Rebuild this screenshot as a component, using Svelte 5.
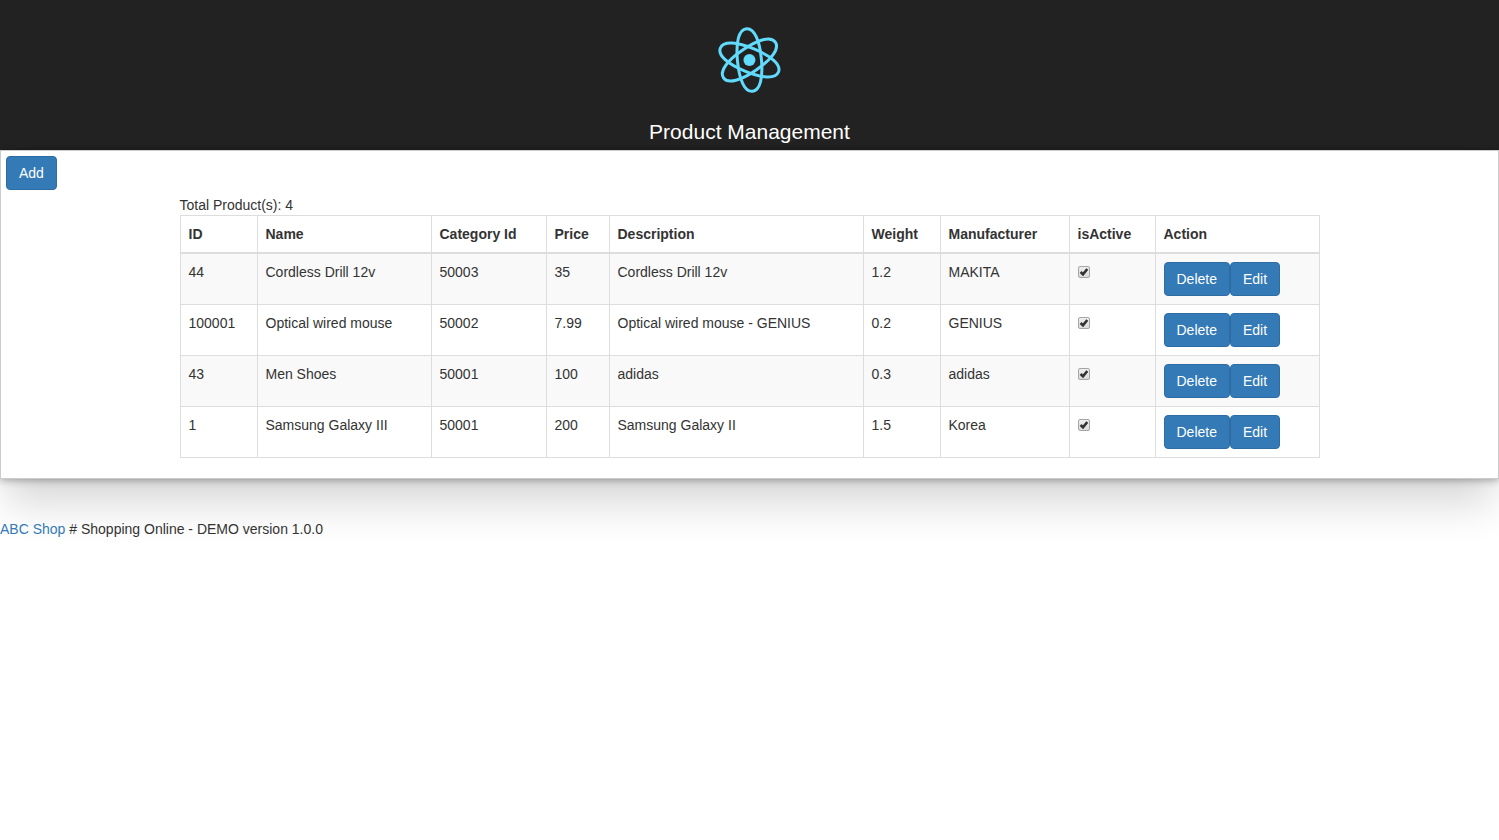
<script>
  const products = [
    { id: 44, name: 'Cordless Drill 12v', category: 50003, price: 35, description: 'Cordless Drill 12v', weight: 1.2, manufacturer: 'MAKITA', active: true },
    { id: 100001, name: 'Optical wired mouse', category: 50002, price: 7.99, description: 'Optical wired mouse - GENIUS', weight: 0.2, manufacturer: 'GENIUS', active: true },
    { id: 43, name: 'Men Shoes', category: 50001, price: 100, description: 'adidas', weight: 0.3, manufacturer: 'adidas', active: true },
    { id: 1, name: 'Samsung Galaxy III', category: 50001, price: 200, description: 'Samsung Galaxy II', weight: 1.5, manufacturer: 'Korea', active: true }
  ];
  const columns = [
    { label: 'ID', width: 77 },
    { label: 'Name', width: 174 },
    { label: 'Category Id', width: 115 },
    { label: 'Price', width: 63 },
    { label: 'Description', width: 254 },
    { label: 'Weight', width: 77 },
    { label: 'Manufacturer', width: 129 },
    { label: 'isActive', width: 86 },
    { label: 'Action', width: 164 }
  ];
  const orbit = 'M11 0C11 2.8 6.4 4.2 0 4.2S-11 2.8-11 0-6.4-4.2 0-4.2 11-2.8 11 0Z';
</script>

<header>
  <svg class="logo" viewBox="-13.8 -14 28 28" aria-hidden="true">
    <g transform="rotate(-5.5)" fill="none" stroke="#61dafb" stroke-width="1.05">
      <path d={orbit} transform="rotate(28)" />
      <path d={orbit} transform="rotate(90)" />
      <path d={orbit} transform="rotate(151)" />
    </g>
    <circle r="2.1" fill="#61dafb" />
  </svg>
  <h1>Product Management</h1>
</header>

<main>
  <div class="toolbar"><button type="button">Add</button></div>
  <div class="container">
    <div>Total Product(s): {products.length}</div>
    <table>
      <colgroup>
        {#each columns as column}<col style:width="{column.width}px" />{/each}
      </colgroup>
      <thead>
        <tr>
          {#each columns as column}<th scope="col">{column.label}</th>{/each}
        </tr>
      </thead>
      <tbody>
        {#each products as p (p.id)}
          <tr>
            <td>{p.id}</td>
            <td>{p.name}</td>
            <td>{p.category}</td>
            <td>{p.price}</td>
            <td>{p.description}</td>
            <td>{p.weight}</td>
            <td>{p.manufacturer}</td>
            <td><input type="checkbox" aria-label="isActive" bind:checked={p.active} /></td>
            <td><button type="button">Delete</button><button type="button">Edit</button></td>
          </tr>
        {/each}
      </tbody>
    </table>
  </div>
</main>

<footer><a href="#shop">ABC Shop</a> # Shopping Online - DEMO version 1.0.0</footer>

<style>
  :global(body) {
    margin: 0;
    background: #fff;
    color: #333;
    font: 14px/20px "Liberation Sans", Arial, sans-serif;
  }
  :global(*) { box-sizing: border-box; }

  header {
    min-height: 150px;
    padding-top: 20px;
    background: #222;
    color: #fff;
    text-align: center;
  }
  .logo {
    display: block;
    width: 80px;
    height: 80px;
    margin: 0 auto 20px;
  }
  h1 {
    margin: 0;
    font-size: 21px;
    font-weight: 400;
    line-height: 23px;
  }

  main {
    border: 1px solid #ccc;
    background: #fff;
    box-shadow: 0 1px 8px rgba(0, 0, 0, 0.35), 0 30px 40px -6px rgba(0, 0, 0, 0.16);
  }
  .toolbar { display: flex; padding: 5px; }
  .container {
    max-width: 1170px;
    margin: 0 auto;
    padding: 0 15px;
  }

  table {
    width: 100%;
    margin-bottom: 20px;
    border: 1px solid #ddd;
    border-collapse: collapse;
    border-spacing: 0;
  }
  th, td {
    padding: 8px;
    border: 1px solid #ddd;
    text-align: left;
    vertical-align: top;
  }
  th { border-bottom-width: 2px; vertical-align: bottom; }
  tbody tr:nth-child(odd) { background: #f9f9f9; }

  button {
    padding: 6px 12px;
    border: 1px solid #2e6da4;
    border-radius: 4px;
    background: #337ab7;
    color: #fff;
    font: inherit;
    vertical-align: middle;
    white-space: nowrap;
    cursor: pointer;
  }
  button:hover { background: #286090; }

  input {
    display: block;
    appearance: none;
    width: 12px;
    height: 12px;
    margin: 4px 0 0;
    border: 1px solid #a6a6a6;
    border-radius: 2px;
    background: linear-gradient(#eee, #dcdcdc);
  }
  input:checked {
    background:
      url("data:image/svg+xml,%3Csvg xmlns='http://www.w3.org/2000/svg' viewBox='0 0 10 10'%3E%3Cpath d='M1.6 5 4 7.4 8.3 2' fill='none' stroke='%23333' stroke-width='2.6'/%3E%3C/svg%3E") center / 10px 10px no-repeat,
      linear-gradient(#eee, #dcdcdc);
  }

  footer {
    margin-top: 40px;
    padding-bottom: 40px;
  }
  a { color: #337ab7; text-decoration: none; }
  a:hover { text-decoration: underline; }
</style>
